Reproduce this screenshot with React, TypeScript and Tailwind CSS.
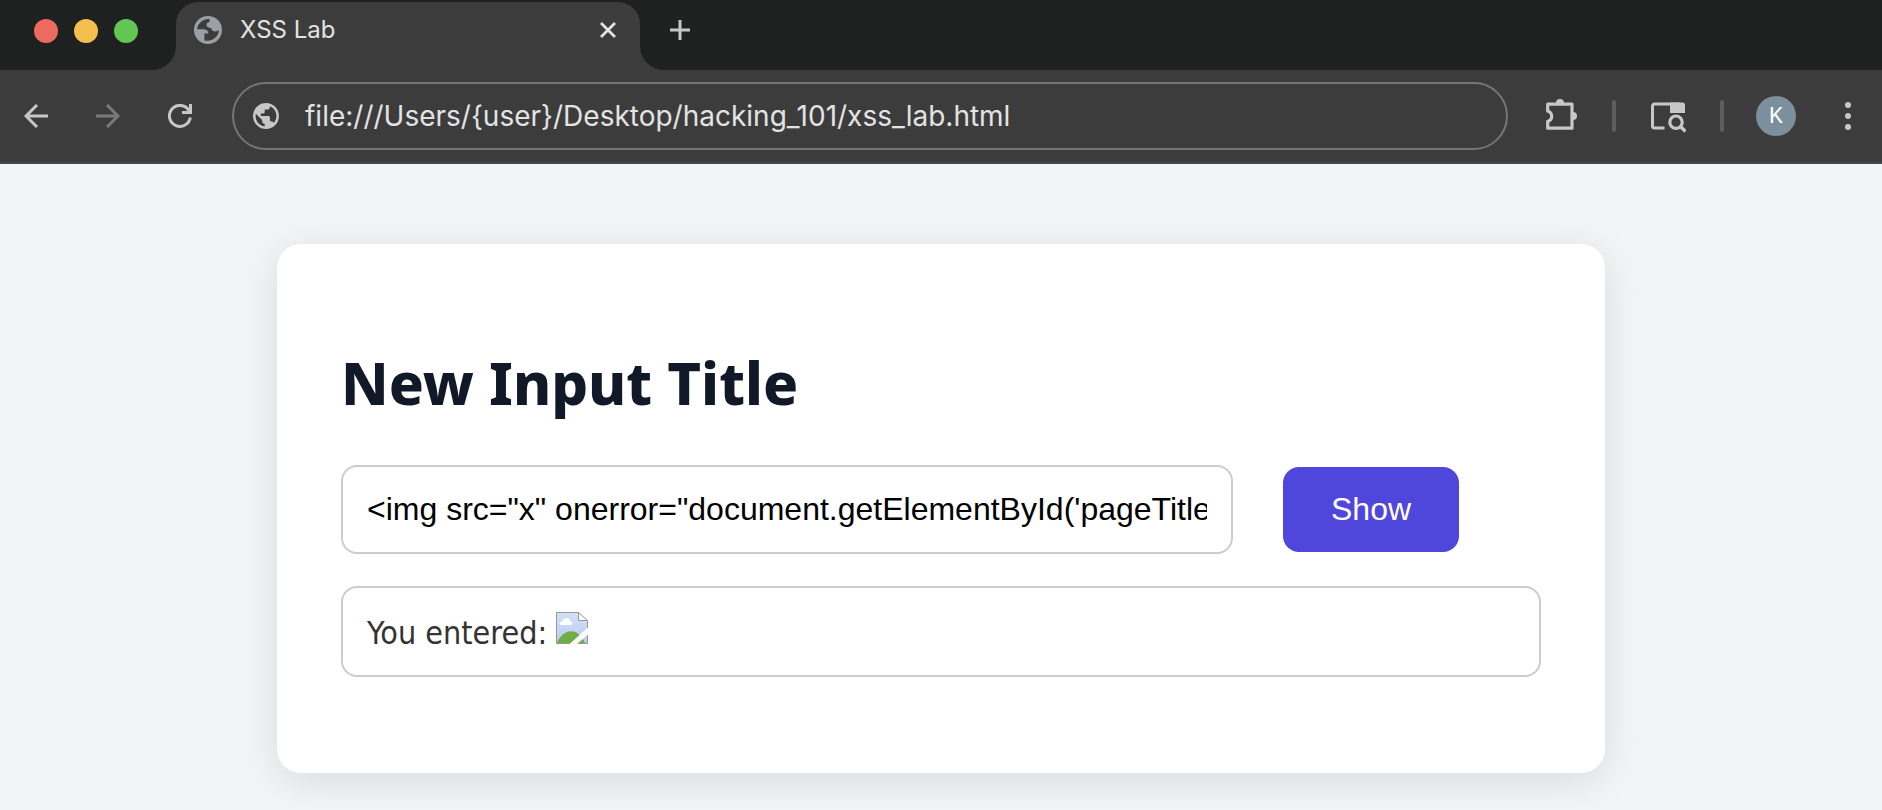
import { useState } from "react";

function TabGlobe() {
  return (
    <svg viewBox="0 0 28 28" className="size-7 shrink-0" aria-hidden="true">
      <circle cx="14" cy="14" r="14" fill="#9aa0a6" />
      <path
        d="M15.5 3.1C9.6 2.5 3.6 7 3.1 13.2H9.500c3.200 0 4.900 1.700 4.900 4.200h-4v4.400c0 1 .1 2 .2 2.600C17.500 26 24.600 21.200 24.900 14c-1.200 1.100-3 1.600-4.800 1.300-2.200-.4-2.700-1.800-2.700-3.300-2.600.2-4.900-.8-4.900-3 0-2.100 1.600-2.900 3-2.900V3.100Z"
        fill="#3c3c3c"
      />
    </svg>
  );
}

function SiteGlobe() {
  return (
    <svg viewBox="2 2 20 20" className="size-[26px] shrink-0" fill="#c7c7c7" aria-hidden="true">
      <path d="M12 2C6.480 2 2 6.480 2 12s4.480 10 10 10 10-4.480 10-10S17.520 2 12 2zm-1 17.930c-3.950-.490-7-3.850-7-7.930 0-.620.080-1.210.210-1.790L9 15v1c0 1.100.900 2 2 2v1.930zm6.900-2.540c-.260-.810-1-1.390-1.900-1.390h-1v-3c0-.550-.450-1-1-1H8v-2h2c.550 0 1-.450 1-1V7h2c1.100 0 2-.900 2-2v-.410c2.930 1.190 5 4.060 5 7.410 0 2.080-.800 3.970-2.100 5.390z" />
    </svg>
  );
}

function BrokenImage() {
  return (
    <svg viewBox="0 0 32 32" className="inline-block size-8 align-baseline" role="img" aria-label="Broken image">
      <defs>
        <linearGradient id="sky" x1="0" y1="0" x2="0" y2="1">
          <stop offset="0" stopColor="#d3e0f8" />
          <stop offset="1" stopColor="#b9cbee" />
        </linearGradient>
      </defs>
      <path d="M.5.500H22.500L31.500 9.500V31.500H.500Z" fill="url(#sky)" />
      <path d="M5.500 13C3 13 2.800 9.800 6 9.400 7 5 13.500 4.600 14.300 9.200c2.600.2 2.600 3.800 0 3.800Z" fill="#fff" />
      <path d="M1 31C4 23.500 9.500 19.300 15 19.300c6 0 11 4.700 14 11.700Z" fill="#6fae47" />
      <path d="M.5.500H22.500L31.500 9.500V31.500H.500Z" fill="none" stroke="#979797" />
      <path d="M22.500.5V8.500H31.500Z" fill="#fff" stroke="#979797" />
      <path d="M32 15.500V22.500L21 32H13.500Z" fill="#fff" />
    </svg>
  );
}

const payload =
  "<img src=\"x\" onerror=\"document.getElementById('pageTitle').innerText='New Input Title'\">";

export default function App() {
  const [value, setValue] = useState(payload);
  return (
    <div className="flex min-h-screen flex-col bg-[#f3f4f6]">
      <header className="border-b-2 border-[#484a49] bg-[#3c3c3c] font-[Inter,sans-serif]">
        <div className="flex h-[70px]">
          <div className="flex w-44 shrink-0 items-start gap-4 rounded-br-3xl bg-[#1f2120] pt-[19px] pl-[34px]">
            <button aria-label="Close window" className="size-6 rounded-full bg-[#ed6a5e]" />
            <button aria-label="Minimize window" className="size-6 rounded-full bg-[#f5bf4f]" />
            <button aria-label="Zoom window" className="size-6 rounded-full bg-[#62c554]" />
          </div>
          <div className="w-[464px] bg-[#1f2120] pt-0.5">
            <div className="flex h-full items-start rounded-t-[22px] bg-[#3c3c3c] pt-3.5 pr-6 pl-[18px]">
              <TabGlobe />
              <span className="ml-[18px] flex-1 text-2xl leading-7 text-[#e3e3e3]">XSS Lab</span>
              <button aria-label="Close tab" className="mt-1.5">
                <svg viewBox="0 0 16 16" className="size-4" stroke="#e3e3e3" strokeWidth="2.8">
                  <path d="M1 1 15 15M15 1 1 15" />
                </svg>
              </button>
            </div>
          </div>
          <div className="flex flex-1 items-start rounded-bl-3xl bg-[#1f2120] pt-5 pl-[30px]">
            <button aria-label="New tab">
              <svg viewBox="0 0 20 20" className="size-5" stroke="#c7c7c7" strokeWidth="3">
                <path d="M10 0V20M0 10H20" />
              </svg>
            </button>
          </div>
        </div>

        <div className="flex h-[92px] items-center pr-[30px] pl-6">
          <div className="flex shrink-0 items-center gap-12">
            <button aria-label="Back">
              <svg viewBox="0 0 24 24" className="size-6" fill="none" stroke="#c7c7c7" strokeWidth="3">
                <path d="M24 12H2M13 1 2 12 13 23" />
              </svg>
            </button>
            <button aria-label="Forward">
              <svg viewBox="0 0 24 24" className="size-6" fill="none" stroke="#7a7a7a" strokeWidth="3">
                <path d="M0 12H22M11 1 22 12 11 23" />
              </svg>
            </button>
            <button aria-label="Reload">
              <svg viewBox="0 0 24 24" className="size-6" fill="none" stroke="#c7c7c7" strokeWidth="3">
                <path d="M22.300 13.500A10.500 10.500 0 1 1 20 5.200L22 8M22.500 0V8.500H14" />
              </svg>
            </button>
          </div>
          <div className="ml-10 flex h-[68px] flex-1 items-center rounded-full border-2 border-[#757575] px-[19px]">
            <SiteGlobe />
            <input
              aria-label="Address"
              defaultValue="file:///Users/{user}/Desktop/hacking_101/xss_lab.html"
              className="ml-[26px] min-w-0 flex-1 bg-transparent text-[28px] leading-9 text-[#e3e3e3] outline-none"
            />
          </div>
          <div className="ml-9 flex shrink-0 items-center">
            <button aria-label="Extensions">
              <svg viewBox="0 0 36 36" className="size-9" fill="none" stroke="#c7c7c7" strokeWidth="3.200">
                <path d="M3.700 13.200V6.200H28V30.200H3.700V23.200C9 22 9 14.400 3.700 13.200Z" strokeLinejoin="round" />
                <path d="M0 14.800H3.300C6 16 6 20.500 3.300 21.600H0Z" fill="#3c3c3c" stroke="none" />
                <path d="M12 5a4 4 0 0 1 8 0ZM29 14a4 4 0 0 1 0 8Z" fill="#c7c7c7" stroke="none" />
              </svg>
            </button>
            <span className="ml-8 h-8 w-1 rounded-full bg-[#5e5e5e]" />
            <button aria-label="Search side panel" className="ml-[34px]">
              <svg viewBox="0 0 36 36" className="size-9" fill="none" stroke="#c7c7c7" strokeWidth="3">
                <path d="M14.500 30H4.500a2 2 0 0 1-2-2V8a2 2 0 0 1 2-2H30" />
                <path d="M20 4.500H32.500a2.500 2.500 0 0 1 2.500 2.500V15H20Z" fill="#c7c7c7" stroke="none" />
                <circle cx="26" cy="24.200" r="6.200" strokeWidth="3.200" />
                <path d="M30 28 35.500 33.500" strokeWidth="3.500" />
              </svg>
            </button>
            <span className="ml-[34px] h-8 w-1 rounded-full bg-[#5e5e5e]" />
            <button
              aria-label="Profile"
              className="ml-8 size-10 rounded-full bg-[#7b8f9c] font-[Roboto,sans-serif] text-[22px] leading-10 text-white"
            >
              K
            </button>
            <button aria-label="Menu" className="ml-12">
              <svg viewBox="0 0 8 28" className="h-7 w-2" fill="#c7c7c7">
                <circle cx="4" cy="3" r="3" />
                <circle cx="4" cy="14" r="3" />
                <circle cx="4" cy="25" r="3" />
              </svg>
            </button>
          </div>
        </div>
      </header>

      <main className="mx-auto mt-20 w-full max-w-[1328px] rounded-3xl bg-white px-16 pt-[103px] pb-24 shadow-[0_8px_40px_rgba(0,0,0,0.1)]">
        <h1 className="font-['Noto_Sans',sans-serif] text-[58px] leading-[72px] font-extrabold text-[#111827]">
          New Input Title
        </h1>
        <div className="mt-[46px] flex items-center gap-[50px]">
          <input
            aria-label="Input"
            value={value}
            onChange={(e) => setValue(e.target.value)}
            className="h-[89px] w-[892px] min-w-0 rounded-2xl border-2 border-[#cccccc] bg-white px-6 font-['Liberation_Sans',Arial,sans-serif] text-[32px] leading-[37px] text-black"
          />
          <button className="rounded-2xl bg-[#4f46dc] px-12 py-6 font-['Liberation_Sans',Arial,sans-serif] text-[32px] leading-[37px] text-white">
            Show
          </button>
        </div>
        <div className="mt-8 rounded-2xl border-2 border-[#cccccc] px-6 py-6 font-['DejaVu_Sans_Condensed','DejaVu_Sans',sans-serif] text-[32px] leading-9 text-[#333333]">
          You entered: <BrokenImage />
        </div>
      </main>
    </div>
  );
}
